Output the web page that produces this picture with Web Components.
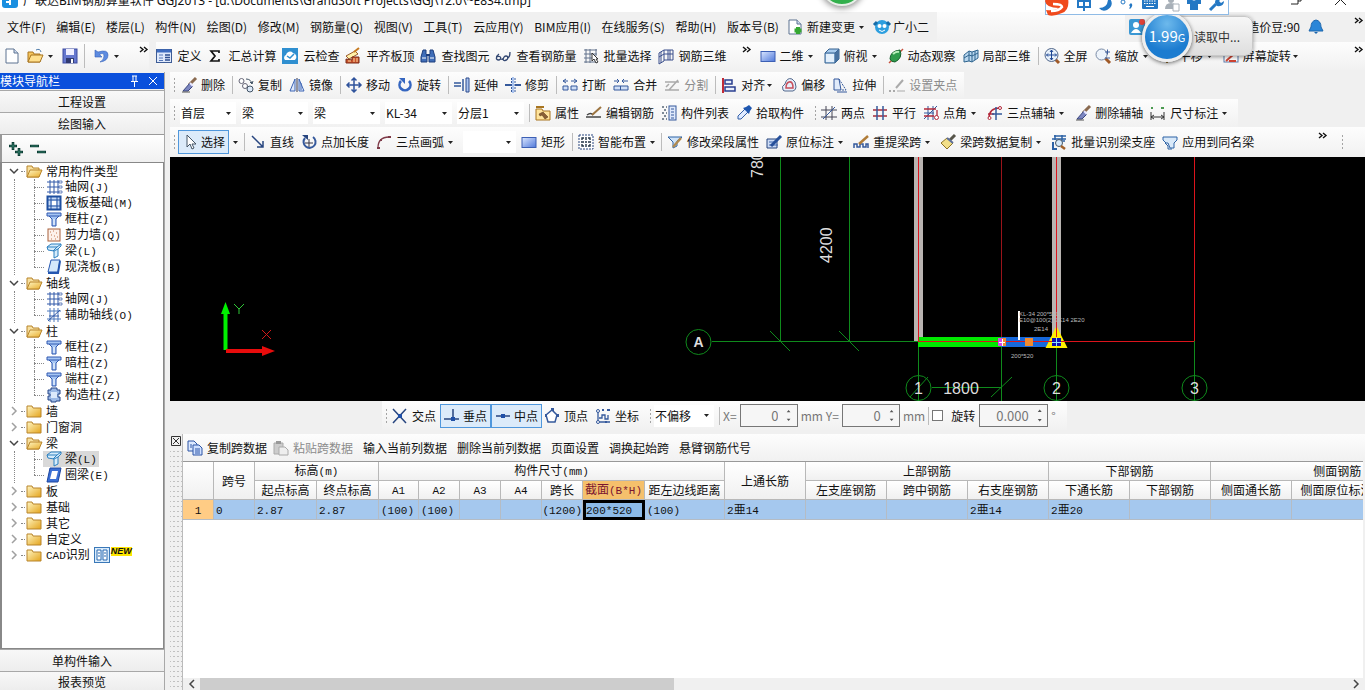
<!DOCTYPE html>
<html lang="zh-CN">
<head>
<meta charset="utf-8">
<title>广联达BIM钢筋算量软件</title>
<style>
html,body{margin:0;height:100%;overflow:hidden}
body{font:12px/16px "Noto Sans CJK SC","Noto Sans",sans-serif;color:#111;background:#f0f0f0}
</style>
</head>
<body>
<app-window></app-window>
<script>
const funnel=(a,b)=>`<path d="M1 2h14v3h-2l-3 3v7H6V8L3 5H1z" fill="${a}" stroke="${b}"/><path d="M3 5h10" stroke="${b}"/><path d="M8 8v6" stroke="#fff"/>`;
const brush='<path d="M15 1l-7 7" stroke="#8a6a50" stroke-width="3"/><path d="M9 6l3 3-5 5H2z" fill="#7c86c0" stroke="#39457e"/><path d="M1 15h8" stroke="#555"/><path d="M9 6l3 3" stroke="#e8e8ff" stroke-width="2"/>';
const mag='<path d="M10 10l5 5" stroke="#a05a28" stroke-width="3"/>';
const sheet='<path d="M2 1h8l4 4v10H2z" fill="#fff" stroke="#5c7291"/><path d="M10 1v4h4" fill="#cfdcf0" stroke="#5c7291"/>';
const ICONS={
app:'<rect width="16" height="16" rx="3" fill="#1a8fe0"/><path d="M3 7h10M8 7v6M4 10h5" stroke="#fff" stroke-width="2"/>',
newdoc:sheet,
open:'<path d="M1 14V4h5l1 2h6v8z" fill="#f6c55c" stroke="#a87520"/><path d="M1 14l3-7h12l-3 7z" fill="#ffdf8c" stroke="#a87520"/><path d="M9 2q4-2 5 2" stroke="#4a78a8" fill="none"/>',
save:'<rect x="1" y="1" width="14" height="14" fill="#6577ce" stroke="#3c4ba0"/><rect x="4" y="1" width="8" height="6" fill="#eef"/><rect x="4" y="10" width="8" height="5" fill="#303a70"/><rect x="9" y="11" width="2" height="4" fill="#fff"/>',
undo:'<path d="M2 2v7h7L6.500 6.500Q11 4 11 8t-4 6q8-1 8-7T5 4z" fill="#5d8be0" stroke="#3460b8" stroke-width=".6"/>',
define:'<rect x="0.500" y="1.500" width="15" height="13" fill="#dfe9fb" stroke="#3d5c96"/><path d="M1 3h14" stroke="#3d6bc0" stroke-width="3"/><path d="M3 7h4M3 10h4M3 12.500h4" stroke="#5577b8"/><path d="M9 7h5M9 9.500h5M9 12h5" stroke="#2e4e90" stroke-width="1.500"/>',
sigma:'<path d="M12 5V3H4l4 5-4 5h8v-2" fill="none" stroke="#111" stroke-width="1.700"/>',
cloud:'<rect width="16" height="16" fill="#2f8fd0"/><path d="M3 12a3 3 0 0 1 1-5 4 4 0 0 1 7-2 4 4 0 0 1 2 7z" fill="#fff"/><path d="M5 8l3 2 4-4" stroke="#2f8fd0" stroke-width="1.500" fill="none"/>',
align:'<path d="M1 8l9-5 3 3-9 5z" fill="#fff1a8" stroke="#9b5a2b"/><path d="M9 4l5-4" stroke="#c67a20" stroke-width="2"/><path d="M1 15v-4l6 1V9h7v6z" fill="#c9522c" stroke="#7a2c18"/><path d="M3 13h3M9 10v4M12 10v4" stroke="#ffd9a0"/>',
find:'<path d="M3 2h3v4l1 1v7H1V9zM10 2h3l2 7v5H9V7l1-1z" fill="#3f6db8" stroke="#1e3e7c"/><path d="M2 10h4M10 10h4" stroke="#fff"/><path d="M6 7h4" stroke="#1e3e7c" stroke-width="2"/>',
view:'<path d="M4 6Q1 8 1.500 11q2 2 4 0 1-3-3-2.500M9 9q-2 4 1 3.500 3-.5 3-3.500-2-2-4 0M12 10q3 0 3-6M6 11q2 1 2-1" fill="none" stroke="#344872" stroke-width="1.300"/>',
batch:'<path d="M1 2h13M1 6h13M1 10h8M1 14h13M3 1v14M7 1v14M13 1v7" stroke="#63728c"/><path d="M9 5v8l2-2 2 4 2-1-2-3h2z" fill="#fff" stroke="#333"/>',
grid3:'<path d="M1 5l5-3v11l-5 3zM6 2h9v10H6M1 9l5-3h9M10 2v10M3 4v11M12 2v10" fill="none" stroke="#3a4f8c"/>',
rect:'<defs><linearGradient id="r" x2="1" y2="1"><stop stop-color="#dbe7ff"/><stop offset="1" stop-color="#4f78da"/></linearGradient></defs><rect x="1" y="3.500" width="14" height="10" fill="url(#r)" stroke="#3c5fb4"/>',
cube:'<path d="M1 5l4-4h10v10l-4 4H1z" fill="#a8cbee" stroke="#35608e"/><path d="M1 5h10v10M11 5l4-4" fill="none" stroke="#35608e"/><path d="M2 6h8v8H2z" fill="#e3effb"/><path d="M11 5l4-4v10l-4 4z" fill="#47719f"/>',
orbit:'<path d="M1 15L15 1" stroke="#c7503c" stroke-width="1.500"/><path d="M2 11Q2 3 12 2q3 8-5 12-4 0-5-3" fill="#2f9b4c" stroke="#17602c"/><path d="M5 6q3-3 6-2" stroke="#b9f0bb" stroke-width="2" fill="none"/>',
part3:'<path d="M1 7l5-4 3 1 6-2v8l-6 4-3-1-5 1z" fill="#b8d6ee" stroke="#2f648e"/><path d="M6 3v10M9 4v10M12 3v9M1 10l5-3 3 1 6-3" fill="none" stroke="#2f648e"/>',
full:mag+'<circle cx="7.500" cy="7" r="6.500" fill="#e8f1fb" stroke="#52688c"/><path d="M7.500 2v10M2.500 7h10M6 4l1.500-2L9 4M6 10l1.500 2L9 10M4 5.500L2.500 7 4 8.500M11 5.500L12.500 7 11 8.500" fill="none" stroke="#1c4695"/>',
zoom:mag+'<circle cx="6.500" cy="6.500" r="5.500" fill="#eef4fb" stroke="#7a8ba6"/><path d="M10 4h5M12.500 1.500v5M10 10h5" stroke="#3b5c9c"/>',
pan:'<path d="M8 1v14M1 8h14" stroke="#987434" stroke-width="2"/>',
spin:'<rect x="1" y="2" width="14" height="12" fill="#fff" stroke="#5a78a8"/><path d="M1 6h14" stroke="#7bb552" stroke-width="3"/><path d="M3 13l8-7M6 13h7" stroke="#cf4534" stroke-width="2"/>',
brush:brush,
copy:'<circle cx="3.500" cy="4" r="2.500" fill="#fff" stroke="#667"/><circle cx="7" cy="9" r="2.500" fill="#fff" stroke="#667"/><circle cx="12" cy="12" r="3" fill="#dce8f8" stroke="#456"/><path d="M8 2q5 0 6 5M12 5l2 2 1-3" fill="none" stroke="#456"/>',
mirror:'<path d="M6 2v12H1z M10 2v12h5z" fill="#dfe9fb" stroke="#3c64b4"/><path d="M8 1v14" stroke="#334"/><path d="M12 6v7" stroke="#3c64b4"/>',
move:'<path d="M8 1v14M1 8h14M5.500 3.500L8 1l2.500 2.500M5.500 12.500L8 15l2.500-2.500M3.500 5.500L1 8l2.500 2.500M12.500 5.500L15 8l-2.500 2.500" fill="none" stroke="#2f539c" stroke-width="1.500"/>',
rotate:'<path d="M4 4a5.500 5.500 0 1 0 8 0" fill="none" stroke="#3566c0" stroke-width="2.600"/><path d="M2 1h6v6z" fill="#3566c0"/>',
extend:'<path d="M0 6h7M0 9h7M9 2v12" stroke="#35599c" stroke-width="1.500"/><path d="M12 1h3v14h-3z" fill="#a9c3ef" stroke="#2c4a8c"/>',
trim:'<path d="M0 8h6M10 8h6" stroke="#35599c" stroke-width="2"/><path d="M8 0v16" stroke="#a9c3ef" stroke-width="2"/><path d="M6.500 1v14M10 1v14" stroke="#35599c" stroke-dasharray="2 1"/>',
cut:'<path d="M1 13h5V9H1zM9 13h6V9H9z" fill="#cfdef6" stroke="#35599c"/><path d="M1 4h5M4 2L1 4l3 2M9 4h6M12 2l3 2-3 2" fill="none" stroke="#35599c"/>',
join:'<path d="M1 13h14v-4H1z" fill="#cfdef6" stroke="#35599c"/><path d="M1 4h5M4 2l2 2-2 2M15 4H9M11 2L9 4l2 2M7.500 9v4" fill="none" stroke="#35599c"/>',
split:'<path d="M1 5h14M1 13h14M2 10l3-3M5 13L14 3" fill="none" stroke="#aaa" stroke-width="1.500"/>',
lalign:'<path d="M2 1v15" stroke="#c02a36" stroke-width="2"/><path d="M4 3h7v4H4zM4 10h10v4H4z" fill="#e9effb" stroke="#2a3f90" stroke-width="1.500"/>',
offset:'<path d="M2 13Q0 9 4 7q2-7 7-5 4 2 4 8 0 3-3 4H4q-1 0-2-1" fill="#e7effb" stroke="#52688c"/><path d="M5 11q0-5 3-6 4-1 4 6z" fill="none" stroke="#c8505c" stroke-width="1.500"/>',
stretch:'<path d="M2 2h5l2 11H2z" fill="#e1ebfa" stroke="#35599c"/><path d="M7 2l7 11H9" fill="none" stroke="#35599c" stroke-dasharray="2 1"/><path d="M5 15h10" stroke="#35599c"/>',
clamp:'<path d="M0 14h2M4 14h2M7 11l7-8" stroke="#aaa" stroke-width="2"/><path d="M8 14h8" stroke="#aaa"/>',
props:'<path d="M1 4h6l1 2h7v9H1z" fill="#ffe49c" stroke="#a87520"/><path d="M1 2h8" stroke="#a87520" stroke-width="2"/><path d="M4 9l4-2 5 5-3 2-3-4-2 1z" fill="#8a6036" stroke="#503010" stroke-width=".5"/>',
rebar:'<path d="M0 12h15M1 10q4-3 6 0" fill="none" stroke="#444" stroke-width="1.500"/><path d="M6 10L15 2" stroke="#9c7440" stroke-width="2"/>',
list:'<path d="M1 2h2M1 8h2M1 14h2M5 2h1M5 8h1M5 14h1M3 5h2M3 11h2" stroke="#567" stroke-width="1.500"/><rect x="8" y="1" width="7" height="14" fill="#dfe9fb" stroke="#35599c"/><path d="M10 4h3M10 7h3M10 10h3M10 13h3" stroke="#35599c"/>',
picker:'<path d="M9 4l3 3-7 7H2v-3z" fill="#dfeaff" stroke="#315ea8"/><path d="M7 3l6 6 1-3 2-3-3-3-3 2z" fill="#1f57b0"/>',
two:'<path d="M0 5h16M0 12h16M5 1v14M11 1v14" stroke="#445"/><path d="M2 14L14 2" stroke="#35599c"/>',
para:'<path d="M1 5h14M1 11h14" stroke="#a52b3c" stroke-width="1.500"/><path d="M5 1v14M11 1v14" stroke="#35599c" stroke-width="1.500"/>',
angle:'<path d="M1 8h10M5 1v14M10 1v14M1 14L14 1" stroke="#35599c"/><path d="M1 4h12M14 5v6M1 11h10" stroke="#b2283a" stroke-width="1.300"/><circle cx="13.500" cy="12.500" r="2" fill="#fff" stroke="#b2283a"/>',
arcaxis:'<path d="M2 13Q2 3 13 3M1 9h6" fill="none" stroke="#b2283a" stroke-width="1.500"/><circle cx="13" cy="3" r="1.500" fill="#fff" stroke="#b2283a"/><circle cx="2.500" cy="13" r="1.500" fill="#fff" stroke="#b2283a"/><path d="M5 9h10M9 2v13" stroke="#35599c" stroke-width="1.500"/>',
dim:'<path d="M1 7v8M14 7v8M1 12h13M4 10l-3 2 3 2M11 10l3 2-3 2" fill="none" stroke="#333"/><path d="M1 3h2M11 3h3" stroke="#4a9a50" stroke-width="2"/>',
arrow:'<path d="M5 1v12l3-3 2 5 2-1-2-4h4z" fill="#fff" stroke="#456"/>',
line:'<path d="M2 2l11 11M13 7v6H7" stroke="#27457f" stroke-width="1.500" fill="none"/>',
ptlen:'<path d="M4 4a6 6 0 1 0 8-1" fill="none" stroke="#35599c" stroke-width="2"/><path d="M8 5v8M4 9h8" stroke="#334"/><path d="M1 1h6v5z" fill="#27457f"/>',
arc:'<path d="M2 14Q2 3 13 3" fill="none" stroke="#7e3a48" stroke-width="1.300"/><path d="M1 13h3v2H1zM12 2h3v2h-3zM4 5h2v2H4z" fill="#7e3a48"/>',
smart:'<rect x="1" y="1" width="14" height="14" fill="#fff" stroke="#27457f" stroke-dasharray="2 1"/><path d="M8 3v3M8 10v3M3 8h3M10 8h3M4 6V4h2M12 6V4h-2M4 10v2h2M12 10v2h-2M7 8h2" fill="none" stroke="#234" stroke-width="1.400"/>',
editseg:'<path d="M1 3h14l-5 4v5l-4 2V8z" fill="#cfe3f8" stroke="#2d62a5"/><path d="M6 13L14 4" stroke="#b08a50" stroke-width="2.500"/>',
label:'<path d="M1 5h10v9H1z" fill="#cddcf5" stroke="#27457f"/><path d="M3 11h9M3 8h6" stroke="#3f66ae"/><path d="M5 12L15 2" stroke="#27509a" stroke-width="3"/>',
respan:'<path d="M1 14v-4h3v3h3v-3h3v3h3v-3h2v4" fill="none" stroke="#35599c" stroke-width="1.500"/><path d="M6 10L15 2" stroke="#b07c38" stroke-width="2.500"/>',
clean:'<path d="M15 1l-5 5" stroke="#57554b" stroke-width="3"/><path d="M1 9l6-5 6 5-6 6z" fill="#f2df88" stroke="#8d7225"/><path d="M7 4l6 5" stroke="#5d6f9a" stroke-width="2"/>',
recog:'<path d="M3 2h12M1 5h14M4 1v5M11 1v5M5 7h9" stroke="#2d62a5" stroke-width="1.500"/><circle cx="8" cy="9" r="3.500" fill="#d8ebfa" stroke="#456"/><path d="M10 12l4 3" stroke="#a26028" stroke-width="2.500"/><path d="M2 8v7h4" fill="none" stroke="#2d62a5" stroke-width="2"/>',
same:'<path d="M1 3h14v3l-3 3v5H8l-2-5H4L1 6z" fill="#d9e9f9" stroke="#2d62a5"/><path d="M3 9l3 3v3h4" fill="none" stroke="#2d62a5"/>',
cross:'<path d="M1 1l13 14M14 1L1 15" stroke="#27457f" stroke-width="1.500"/><rect x="6" y="6" width="4" height="4" fill="#2050a8"/>',
perp:'<path d="M0 11h15M9 1v10" stroke="#27457f" stroke-width="1.500"/><rect x="7" y="9" width="4" height="4" fill="#2050a8"/>',
mid:'<path d="M1 8h14" stroke="#27457f" stroke-width="1.500"/><rect x="6" y="6" width="4" height="4" fill="#2050a8"/>',
vertex:'<path d="M8 2l5 5-2 7H4L2 7z" fill="#fff" stroke="#35599c" stroke-width="1.500"/><path d="M7 0h3v3H7zM1 6h2v3H1zM12 6h3v3h-3z" fill="#35599c"/>',
coord:'<path d="M3 4v10h12M4 10h3V7h3v4h3V7" fill="none" stroke="#35599c" stroke-width="1.300"/><circle cx="3" cy="3" r="1.500" fill="#fff" stroke="#35599c"/><circle cx="3" cy="14" r="1.500" fill="#fff" stroke="#35599c"/><path d="M7 2h2M12 2h3M10 14h2" stroke="#35599c" stroke-width="2"/>',
copyspan:'<path d="M1 1h6l3 3v7H1z" fill="#dce9ff" stroke="#2d55a5"/><path d="M6 5h6l3 3v7H6z" fill="#cfe0ff" stroke="#2d55a5"/><path d="M8 9h5M8 11h5M8 13h5M3 5h2M3 7h2" stroke="#2d55a5"/>',
paste:'<path d="M1 3h9v11H1z" fill="#ccc" stroke="#aaa"/><path d="M3 1h5v3H3z" fill="#999"/><path d="M6 7h6l3 3v5H6z" fill="#eee" stroke="#aaa"/>',
change:sheet+'<path d="M11 8v7M7.500 11.500h7" stroke="#36a832" stroke-width="4"/>',
mascot:'<circle cx="8" cy="8" r="7" fill="#2d9fdf"/><path d="M0 6l3-3M16 6l-3-3" stroke="#176ca8" stroke-width="3"/><circle cx="5.500" cy="7" r="2" fill="#fff"/><circle cx="10.500" cy="7" r="2" fill="#fff"/><path d="M5 11q3 3 6 0" stroke="#fff" fill="none"/>',
user:'<rect width="16" height="16" rx="2" fill="#3b98d4"/><circle cx="7" cy="6" r="3" fill="#fff"/><path d="M2 14q5-8 10 0z" fill="#fff"/><circle cx="13" cy="3" r="3" fill="#e04137"/>',
bell:'<path d="M8 1q5 1 5 7l2 4H1l2-4q0-6 5-7z" fill="#2a86d8" stroke="#1c66ad"/><path d="M6 13h4l-2 2z" fill="#1c66ad"/>',
folder:'<defs><linearGradient id="f" x2="1" y2="1"><stop stop-color="#fff6c4"/><stop offset="1" stop-color="#e4a41c"/></linearGradient></defs><path d="M1 14V3h5l1 2h8v9z" fill="url(#f)" stroke="#b8842a"/>',
folderopen:'<defs><linearGradient id="g" x2="1" y2="1"><stop stop-color="#fff6c4"/><stop offset="1" stop-color="#e8ac2a"/></linearGradient></defs><path d="M1 14V3h5l1 2h6v9z" fill="#f7e0a0" stroke="#b8842a"/><path d="M1 14l3-7h12l-3 7z" fill="url(#g)" stroke="#b8842a"/>',
axis:'<path d="M1 3h12M1 8h12M1 13h12M4 1v14M8 1v14M12 1v14" stroke="#3058a8"/><path d="M13 2h3v2h-3zM13 7h3v2h-3zM13 12h3v2h-3z" fill="#fff" stroke="#3058a8" stroke-width=".7"/>',
raft:'<rect x="1.500" y="1.500" width="13" height="13" fill="#c6daf6" stroke="#1e4fa0" stroke-width="2"/><path d="M2 5h12M2 11h12M5 2v12M11 2v12" stroke="#1e4fa0"/><rect x="6" y="6" width="4" height="4" fill="#fff"/>',
column:funnel('#a6c6f4','#3058b0'),
wall:'<rect x="2" y="2" width="12" height="12" fill="#fdf1ea" stroke="#a8603c"/><path d="M4 5h1M7 4h1M10 6h1M5 8h1M8 9h1M11 10h1M5 12h1M9 12h1" stroke="#c47850"/>',
beam:'<path d="M1 4l4-3h10v2l-3 3v7l-4 2V8L2 7z" fill="#d6ecfb" stroke="#2d80c0"/><path d="M1 4h10l4-3M11 4L7 8M8 8l4-2" fill="none" stroke="#2d80c0"/>',
slab:'<path d="M5 1h9l-2 12H2z" fill="#d4e8fb" stroke="#2456b0"/><path d="M2 14h10l2-12" fill="none" stroke="#2456b0" stroke-width="2"/>',
aux:'<path d="M1 4h14M1 12h14M4 1v14M12 1v14M8 1v14" stroke="#4d78bd"/><path d="M2 14L14 3M3 9h10" stroke="#3058a8"/>',
struct:'<path d="M5 1h6v2h3v4h-2v3h2v4h-4v1H5v-2H2V9h2V7H2V3h3z" fill="#9cb9e6" stroke="#274788"/><path d="M5 5h6v6H5z" fill="#dce9fb"/>',
ring:'<path d="M4 1h11l-3 14H1z" fill="#3b6fd4" stroke="#1c46a0"/><path d="M6 4h6l-2 8H4z" fill="#fff"/>',
cad:'<rect x=".5" y=".5" width="15" height="15" fill="#d9ebfb" stroke="#3a78b8"/><path d="M3 3h4v10H3zM9 3h4v10H9z" fill="#fff" stroke="#2868b0"/><path d="M4 6h2M4 9h2M10 6h2M10 9h2" stroke="#2868b0"/>',
plus:'<path d="M5 1v8M1 5h8M11 7v8M7 11h8" stroke="#0c3c34" stroke-width="2.600"/><path d="M5 2v6M2 5h6M11 8v6M8 11h6" stroke="#3f9a80" stroke-width=".6"/>',
minus:'<path d="M0 5h9M7 11h9" stroke="#0c3c34" stroke-width="2.600"/><path d="M1 5h7M8 11h7" stroke="#3f9a80" stroke-width=".6"/>',
sogou:'<path d="M2-5Q18-8 22-2q2 12-6 15-9 4-14 2l-2-5q8 1 13-2-13 0-14-7z" fill="#f04a1c"/><path d="M4-2q8-4 14 0M7 4q9 0 9 3-3 4-11 4" stroke="#fff" stroke-width="2.500" fill="none"/>',
zhong:'<path d="M2 1h12v6H2zM8-3v14" fill="none" stroke="#2478c4" stroke-width="2"/>',
moon:'<path d="M10-4q8 9-1 14-5 2-8-2 10 0 9-12z" fill="#2478c4"/>',
punct:'<circle cx="3" cy="2" r="2" fill="none" stroke="#2478c4"/><path d="M11 3q3 2-1 6l-1-1q2-1 0-3z" fill="#2478c4"/>',
keys:'<rect y="-2" width="16" height="11" rx="1" fill="#2478c4"/><path d="M2 1h12M2 3.500h12" stroke="#fff" stroke-dasharray="1.500 1"/><path d="M4 6.500h8" stroke="#fff"/>',
person:'<circle cx="7" cy="0" r="3" fill="#a8b0b8"/><path d="M1 9q0-6 6-6t6 6z" fill="#a8b0b8"/><path d="M9 4h6v7H9z" fill="#fff" stroke="#a8b0b8"/>',
shirt:'<path d="M1-1h4q3 3 6 0h4v5h-3v6H4V4H1z" fill="#2478c4"/>',
wrench:'<path d="M2 10l6-6" stroke="#2478c4" stroke-width="3"/><path d="M7 3q0-6 7-5l-3 3 2 2 3-2q0 6-7 5z" fill="#2478c4"/>'
};
const CARET='<svg width="5" height="3" viewBox="0 0 5 3" aria-hidden="true"><path d="M0 0h5L2.500 3z" fill="#222"/></svg>';
const ascii=t=>t.replace(/[ -~]+/g,s=>`<span class="m">${s}</span>`);
const MONO='.m{font:11px/16px "Liberation Mono",monospace}';

function define(name,render){
  customElements.define(name,class extends HTMLElement{
    connectedCallback(){
      if(this.shadowRoot) return;
      const t=document.createElement('template');
      t.innerHTML=render(this);
      this.attachShadow({mode:'open'}).append(t.content.cloneNode(true));
    }
  });
}

define('ui-icon',e=>`<style>:host{display:block;flex:none;width:16px;height:16px}svg{display:block;overflow:visible}</style>
<svg width="16" height="16" viewBox="0 0 16 16" aria-hidden="true">${ICONS[e.getAttribute('name')]||''}</svg>`);

define('tool-button',e=>{
  const i=e.getAttribute('icon');
  return `<style>
:host{display:block;flex:none;margin-right:var(--item-gap,7px)}
button{display:flex;align-items:center;gap:var(--icon-gap,4px);height:24px;margin:0;padding:0;border:0;background:none;font:inherit;color:inherit;white-space:nowrap}
button:disabled{color:#8c8c8c}
:host([pressed]) button{background:#dcebfa;outline:1px solid #4f97dc;outline-offset:-1px;padding:0 4px}
.c{display:flex;justify-content:center;width:var(--caret,13px);margin-left:calc(0px - var(--icon-gap,4px))}
</style><button${e.hasAttribute('disabled')?' disabled':''}>${i?`<ui-icon name="${i}"></ui-icon>`:''}<slot></slot>${e.hasAttribute('caret')?`<span class="c">${CARET}</span>`:''}</button>`});

define('tool-sep',()=>`<style>:host{display:block;flex:none;width:1px;height:18px;background:#bcbcbc;margin-right:5px}</style>`);
define('tool-grip',()=>`<style>:host{display:block;flex:none;width:3px;height:16px;margin:0 4px 0 3px;background:radial-gradient(circle,#a4a4a4 1px,transparent 1px) 0 0/3px 4px}</style>`);
define('tool-more',()=>`<style>:host{display:block;flex:none;width:10px;height:20px}svg{display:block}</style>
<svg width="10" height="8" viewBox="0 0 10 8"><path d="M1 1l3 2.500L1 6M5 1l3 2.500L5 6" fill="none" stroke="#111" stroke-width="1.400"/></svg>`);

define('tool-combo',e=>`<style>
:host{display:flex;flex:none;align-items:center;position:relative;width:var(--w,72px)}
select{appearance:none;width:100%;height:22px;margin:0 5px 0 0;padding:0 0 0 1px;border:0;border-radius:0;background:#fff;font:inherit;color:inherit}
svg{position:absolute;right:10px;pointer-events:none}
</style><select aria-label="${e.getAttribute('label')}"><option>${e.getAttribute('value')}</option></select>${CARET}`);

define('tool-bar',()=>`<style>
:host{display:flex;flex:none;align-items:center;box-sizing:border-box;background:linear-gradient(#fdfdfd,#f1f1f1)}
</style><slot></slot>`);

define('number-field',e=>`<style>
:host{display:flex;flex:none;align-items:center;color:#777}
label{display:flex;align-items:center;gap:3px}
.b{display:flex;align-items:center;box-sizing:border-box;width:var(--w,58px);height:23px;border:1px solid #777;background:#f6f6f6;padding-right:5px}
input{width:100%;min-width:0;border:0;padding:0 8px 0 0;background:none;text-align:right;font:inherit;font-size:13px;color:inherit}
</style><label>${e.getAttribute('label')||''}<span class="b"><input value="${e.getAttribute('value')}" aria-label="${e.getAttribute('name')}"><svg width="7" height="15" viewBox="0 0 7 15"><path d="M1 3h5L3.500 0zM1 12h5l-2.500 3z" fill="#555"/></svg></span>${e.getAttribute('unit')}</label>`);

define('title-bar',()=>`<style>
:host{display:flex;align-items:flex-end;height:12px;flex:none;overflow:hidden;background:#fff;font-family:"Noto Sans","Noto Sans CJK SC",sans-serif}
ui-icon{margin:0 5px 4px 2px}
h1{font:inherit;margin:0;flex:1;padding-bottom:3px;white-space:nowrap}
svg{margin-right:16px}
</style><ui-icon name="app"></ui-icon><h1>广联达BIM钢筋算量软件 GGJ2013 - [d:\\Documents\\GrandSoft Projects\\GGJ\\12.0\\~E834.tmp]</h1>
<svg width="60" height="12" viewBox="0 0 60 12"><path d="M2 4h7V-3M9 1h3v-5M46-6L57 5M57-6L46 5" stroke="#222" fill="none"/></svg>`);

define('menu-bar',()=>`<style>
:host{display:flex;align-items:center;height:30px;flex:none;padding-left:7px}
nav{display:flex;justify-content:space-between;width:772px;flex:none}
a{color:inherit;text-decoration:none;white-space:nowrap}
.x{display:flex;align-items:center;margin-left:8px}
.f{flex:1;align-self:stretch;background:linear-gradient(#fcfcfc,#f1f1f1);margin-left:1px}
.r{display:flex;align-items:center;margin-left:4px}
.r span{margin:0 8px 0 102px}
tool-more{margin:0 0 0 30px;padding-right:1px}
</style><nav>${['文件(F)','编辑(E)','楼层(L)','构件(N)','绘图(D)','修改(M)','钢筋量(Q)','视图(V)','工具(T)','云应用(Y)','BIM应用(I)','在线服务(S)','帮助(H)','版本号(B)'].map(t=>`<a href="#">${t}</a>`).join('')}</nav>
<div class="x"><tool-button icon="change" caret style="--item-gap:6px">新建变更</tool-button><tool-button icon="mascot" style="--icon-gap:3px">广小二</tool-button></div><div class="f"></div>
<div class="r"><ui-icon name="user"></ui-icon><span>造价豆:90</span><ui-icon name="bell"></ui-icon><tool-more></tool-more></div>`);

define('main-tools',()=>`<style>
:host{display:flex;flex:none;height:30px}
tool-bar{height:28px}
.a{padding-left:4px;--item-gap:4px;--caret:15px}
.a tool-sep{margin:0 8px 0 0;height:24px}
.b{--item-gap:6px;--icon-gap:5px;margin-left:7px}
.c{flex:1;padding-left:8px}
.m1{margin-left:11px}.m2{margin-left:9px}
.end{margin:0 1px 0 auto}
</style>
<tool-bar class="a"><tool-button icon="newdoc"></tool-button><span>&nbsp;</span><tool-button icon="open" caret></tool-button><tool-button icon="save"></tool-button><span>&nbsp;</span><tool-sep></tool-sep><tool-button icon="undo" caret></tool-button><tool-more class="m1"></tool-more></tool-bar>
<tool-bar class="b"><tool-button icon="define">定义</tool-button><tool-button icon="sigma">汇总计算</tool-button><tool-button icon="cloud">云检查</tool-button><tool-button icon="align">平齐板顶</tool-button><tool-button icon="find">查找图元</tool-button><tool-button icon="view">查看钢筋量</tool-button><tool-button icon="batch">批量选择</tool-button><tool-button icon="grid3">钢筋三维</tool-button><tool-more class="m2"></tool-more></tool-bar>
<tool-bar class="c"><tool-button icon="rect" caret>二维</tool-button><tool-button icon="cube" caret>俯视</tool-button><tool-button icon="orbit">动态观察</tool-button><tool-button icon="part3">局部三维</tool-button><tool-sep></tool-sep><tool-button icon="full">全屏</tool-button><tool-button icon="zoom" caret>缩放</tool-button><tool-button icon="pan" caret>平移</tool-button><tool-button icon="spin" caret style="--caret:9px">屏幕旋转</tool-button><tool-more class="end"></tool-more></tool-bar>`);

define('edit-tools',()=>`<style>
:host{display:grid;flex:none;grid-template-rows:27px 28px 30px;justify-items:start}
tool-bar{height:26px}
.r3{height:28px}
.w{width:100%;height:30px;--caret:12px}
.end{margin:0 10px 0 auto}
.tail{margin-right:21px}
.g2{margin-right:5px}
.g4{margin-right:2px}
.caret{margin-right:6px;display:flex}
</style>
<tool-bar style="--caret:9px"><tool-grip class="g2"></tool-grip><tool-button icon="brush">删除</tool-button><tool-sep></tool-sep><tool-button icon="copy">复制</tool-button><tool-button icon="mirror">镜像</tool-button><tool-sep></tool-sep><tool-button icon="move">移动</tool-button><tool-button icon="rotate">旋转</tool-button><tool-sep></tool-sep><tool-button icon="extend">延伸</tool-button><tool-button icon="trim">修剪</tool-button><tool-sep></tool-sep><tool-button icon="cut">打断</tool-button><tool-button icon="join">合并</tool-button><tool-button icon="split" disabled>分割</tool-button><tool-sep></tool-sep><tool-button icon="lalign" caret>对齐</tool-button><tool-button icon="offset">偏移</tool-button><tool-button icon="stretch">拉伸</tool-button><tool-sep></tool-sep><tool-button icon="clamp" disabled>设置夹点</tool-button></tool-bar>
<tool-bar class="r3"><tool-grip></tool-grip><tool-combo label="楼层" value="首层" style="--w:61px"></tool-combo><tool-combo label="构件类型" value="梁"></tool-combo><tool-combo label="构件类别" value="梁"></tool-combo><tool-combo label="构件" value="KL-34"></tool-combo><tool-combo label="分层" value="分层1"></tool-combo><tool-sep></tool-sep><tool-button icon="props">属性</tool-button><tool-button icon="rebar">编辑钢筋</tool-button><tool-button icon="list">构件列表</tool-button><tool-button icon="picker">拾取构件</tool-button><tool-grip></tool-grip><tool-button icon="two">两点</tool-button><tool-button icon="para">平行</tool-button><tool-button icon="angle" caret>点角</tool-button><tool-button icon="arcaxis" caret>三点辅轴</tool-button><tool-button icon="brush">删除辅轴</tool-button><tool-button icon="dim" caret>尺寸标注</tool-button></tool-bar>
<tool-bar class="w"><tool-grip class="g4"></tool-grip><tool-button icon="arrow" pressed style="--item-gap:4px;--icon-gap:3px">选择</tool-button><span class="caret">${CARET}</span><tool-sep></tool-sep><tool-button icon="line">直线</tool-button><tool-button icon="ptlen">点加长度</tool-button><tool-button icon="arc" caret>三点画弧</tool-button><tool-combo label="弧参数" value="" style="--w:58px"></tool-combo><tool-button icon="rect">矩形</tool-button><tool-sep></tool-sep><tool-button icon="smart" caret style="--item-gap:3px">智能布置</tool-button><tool-sep></tool-sep><tool-button icon="editseg">修改梁段属性</tool-button><tool-button icon="label" caret>原位标注</tool-button><tool-button icon="respan" caret>重提梁跨</tool-button><tool-button icon="clean" caret>梁跨数据复制</tool-button><tool-button icon="recog">批量识别梁支座</tool-button><tool-button icon="same">应用到同名梁</tool-button><tool-more class="end"></tool-more><tool-grip class="tail"></tool-grip></tool-bar>`);

define('tree-node',e=>`<style>${MONO}
:host{display:flex;align-items:center;height:16px;margin-left:32px;position:relative;white-space:nowrap}
:host::before{content:"";width:10px;border-top:1px dotted #888;flex:none}
:host::after{content:"";position:absolute;left:0;top:0;height:16px;border-left:1px dotted #888}
:host(:last-child)::after{height:8px}
span.l{display:flex;align-items:center;padding:0 2px 0 3px;gap:3px;height:16px;margin-left:-1px}
:host([selected]) .l{background:#d9d9d9}
</style><span class="l"><ui-icon name="${e.getAttribute('icon')}"></ui-icon><span>${ascii(e.getAttribute('label'))}</span></span>`);

define('tree-group',e=>{
  const o=e.hasAttribute('open');
  return `<style>${MONO}
:host{display:block}
.h{display:flex;align-items:center;height:16px;white-space:nowrap}
.h svg{width:10px;margin:0 2px 0 7px}
.h i{width:4px;border-top:1px dotted #888;margin-right:1px}
.h ui-icon{margin-right:4px}
.k{position:relative}
.k::before{content:"";position:absolute;left:12px;top:0;bottom:0;border-left:1px dotted #888}
b{font:italic bold 9px/9px "Liberation Sans",sans-serif;background:#ffe600;margin:-7px 0 0 1px}
</style><div class="h"><svg height="10" viewBox="0 0 10 10"><path d="${o?'M1 3l4 4 4-4':'M3 1l4 4-4 4'}" fill="none" stroke="${o?'#444':'#a0a0a0'}" stroke-width="1.500"/></svg><i></i><ui-icon name="${o?'folderopen':'folder'}"></ui-icon><span>${ascii(e.getAttribute('label'))}</span>${e.hasAttribute('fresh')?'<ui-icon name="cad" style="margin:0 0 0 4px"></ui-icon><b>NEW</b>':''}</div><div class="k"><slot></slot></div>`});

define('nav-panel',()=>{
  const G=(l,k)=>`<tree-group label="${l}"${k?' open':''}${l==='CAD识别'?' fresh':''}>${(k||[]).map(([i,t,s])=>`<tree-node icon="${i}" label="${t}"${s?' selected':''}></tree-node>`).join('')}</tree-group>`;
  return `<style>
:host{display:flex;flex-direction:column;width:165px;flex:none;min-height:0;box-sizing:border-box;border-right:1px solid #a8a8a8}
header{display:flex;align-items:center;height:16px;margin-top:1px;background:#0a50dc;color:#fff;flex:none}
header span{flex:1}
header svg{margin-right:4px}
button{display:block;flex:none;width:100%;height:22px;margin:0;padding:0;border:1px solid #a8a8a8;border-width:1px 0 0;background:linear-gradient(#f8f8f8,#ededed);font:inherit;color:inherit}
.t{display:flex;align-items:center;gap:6px;box-sizing:border-box;height:28px;flex:none;padding-left:6px;border:1px solid #999;border-width:1px 0 0 2px;background:linear-gradient(#fff,#f0f0f0)}
.tree{flex:1;min-height:0;overflow:hidden;background:#fff;border:1px solid #888;border-left-width:2px}
.last{height:19px;padding-top:2px}
</style><header><span>模块导航栏</span><svg width="32" height="14" viewBox="0 0 32 14"><path d="M4 2h5M5 2v5M8 2v5M3 7.500h7M6.500 8v5M21 3l8 8M29 3l-8 8" stroke="#fff" fill="none"/></svg></header>
<button style="margin-top:1px">工程设置</button><button>绘图输入</button>
<div class="t"><ui-icon name="plus"></ui-icon><ui-icon name="minus"></ui-icon></div>
<div class="tree">${G('常用构件类型',[['axis','轴网(J)'],['raft','筏板基础(M)'],['column','框柱(Z)'],['wall','剪力墙(Q)'],['beam','梁(L)'],['slab','现浇板(B)']])+G('轴线',[['axis','轴网(J)'],['aux','辅助轴线(O)']])+G('柱',[['column','框柱(Z)'],['column','暗柱(Z)'],['column','端柱(Z)'],['struct','构造柱(Z)']])+G('墙')+G('门窗洞')+G('梁',[['beam','梁(L)',1],['ring','圈梁(E)']])+G('板')+G('基础')+G('其它')+G('自定义')+G('CAD识别')}</div>
<button>单构件输入</button><button class="last">报表预览</button>`});

define('cad-view',()=>`<style>:host{display:block;flex:none;height:244px;background:#000;overflow:hidden}svg{display:block;width:100%;height:244px}
text{font-family:"Liberation Sans",sans-serif;fill:#ddd}.s{font-size:6px;fill:#bbb}.d{font-size:16px}.a{font-size:14px;font-weight:700}</style>
<svg role="img" aria-label="梁平面图">
<g stroke="#0f8a1c" fill="none"><path d="M610.500 0v184M679.500 0v184M542 184.500h207M600 174l20 20M669 174l20 20M748.500 184v60M831.500 184v60M886.500 184v60M1024.500 184v60M762 230.500h70M740 240l18-20M821 240l21-20"/>
<circle cx="528.500" cy="185" r="12.500"/><circle cx="748.500" cy="231" r="12.500"/><circle cx="886.500" cy="231" r="12.500"/><circle cx="1024.500" cy="231" r="12.500"/></g>
<path d="M744 0h9v184h-9zM882 0h9v184h-9z" fill="#b9b4b1"/>
<path d="M748 180h83v10h-83z" fill="#00e800"/><path d="M831 180h50v10h-50z" fill="#1668dc"/>
<path d="M886.500 169l11 22h-22z" fill="#fff000"/>
<path d="M748.500 0v184M886.500 0v180M1024.500 0v184" stroke="#dc141c" fill="none"/><path d="M831.500 0v180" stroke="#9a141a"/>
<path d="M748 184.500h276" stroke="#dc141c"/>
<path d="M832 181h4v8h-4zM855 181h8v8h-8z" fill="#f08a30"/><path d="M828 181h4v8h-4z" fill="#d848e8"/><path d="M829 185.500h6M832.500 182v7" stroke="#fff"/>
<path d="M882 181h9v8h-9z" fill="#1010b0"/><path d="M882 185.500h9M886.500 181v8" stroke="#8fe0ff"/>
<path d="M849 154v29" stroke="#fff" stroke-width="2"/>
<text class="s" x="849" y="159">KL-34 200*520</text><text class="s" x="849" y="165">E10@100(2) 2E14 2E20</text><text class="s" x="864" y="174">2E14</text><text class="s" x="841" y="201">200*520</text>
<text class="a" x="528.500" y="190" text-anchor="middle">A</text>
<text class="d" x="748.500" y="237" text-anchor="middle">1</text><text class="d" x="791" y="237" text-anchor="middle">1800</text><text class="d" x="886.500" y="237" text-anchor="middle">2</text><text class="d" x="1024.500" y="237" text-anchor="middle">3</text>
<text class="d" transform="translate(662 106) rotate(-90)">4200</text><text class="d" transform="translate(593 21) rotate(-90)">7800</text>
<path d="M55.500 193v-38" stroke="#00f000" stroke-width="4"/><path d="M51 157l4.500-12 4.500 12z" fill="#00f000"/>
<path d="M56 194h38" stroke="#e80c0c" stroke-width="4"/><path d="M92 189l13 5-13 5z" fill="#e80c0c"/>
<path d="M64 147l5 5 5-5M69 152v5" stroke="#30c838" fill="none"/><path d="M92 173l9 9M101 173l-9 9" stroke="#d01818"/>
</svg>`);

define('snap-bar',()=>`<style>
:host{display:flex;flex:none;height:30px;margin-bottom:3px}
tool-bar{height:29px;margin-left:212px;padding-right:8px}
.g{margin-right:2px}
label{display:flex;align-items:center;margin-right:4px}
input{appearance:none;width:11px;height:11px;margin:0 8px 0 0;border:1px solid #777;background:#fff}
number-field{margin-right:3px}
tool-sep{margin-right:3px}
.n{--item-gap:0px;--icon-gap:3px}.p{--item-gap:4px}
</style><tool-bar><tool-grip></tool-grip><tool-button icon="cross" class="p">交点</tool-button><tool-button icon="perp" pressed class="n">垂点</tool-button><tool-button icon="mid" pressed style="--item-gap:2px;--icon-gap:3px">中点</tool-button><tool-button icon="vertex">顶点</tool-button><tool-button icon="coord">坐标</tool-button><tool-grip class="g"></tool-grip><tool-combo label="偏移方式" value="不偏移" style="--w:65px"></tool-combo><tool-sep></tool-sep><number-field label="X=" name="X" value="0" unit="mm"></number-field><number-field label="Y=" name="Y" value="0" unit="mm"></number-field><tool-sep></tool-sep><label><input type="checkbox">旋转</label><number-field name="角度" value="0.000" unit="°" style="--w:69px"></number-field></tool-bar>`);

define('span-grid',()=>{
  const w=[31,41,62,62,40,41,41,41,41,62,80,81,81,81,81,81,81,81,102,70];
  const sub=['起点标高','终点标高','A1','A2','A3','A4','跨长','截面(B*H)','距左边线距离'];
  const sub2=['左支座钢筋','跨中钢筋','右支座钢筋','下通长筋','下部钢筋','侧面通长筋','侧面原位标注筋','拉筋'];
  const row=['0','2.87','2.87','(100)','(100)','','','(1200)','200*520','(100)','2亜14','','','2亜14','2亜20','','','',''];
  return `<style>${MONO}
:host{display:block;flex:1;min-height:0;overflow:hidden;background:#fff;border-top:1px solid #999;margin-right:2px}
table{table-layout:fixed;border-collapse:separate;border-spacing:0;width:${w.reduce((a,b)=>a+b)}px}
th,td{box-sizing:border-box;padding:0;white-space:nowrap;overflow:hidden;font-weight:400;border-right:1px solid #b8b8b8;border-bottom:1px solid #b8b8b8}
th{height:19px;background:linear-gradient(#fff,#f0f0f0);text-align:center}
td{height:20px;background:#a5c8ee;border-color:#b5bcc4;padding-left:2px}
td.n{background:#ffcc85;text-align:center;padding:0}
th.on{background:#f5c06c;color:#7a1430}
td.on{outline:3px solid #000;outline-offset:-3px;background:#8dbbe8;padding-left:3px}
td.r{text-align:right;padding:0}
</style><table><colgroup>${w.map(x=>`<col style="width:${x}px">`).join('')}</colgroup>
<thead><tr><th rowspan="2"></th><th rowspan="2">跨号</th><th colspan="2">${ascii('标高(m)')}</th><th colspan="7">${ascii('构件尺寸(mm)')}</th><th rowspan="2">上通长筋</th><th colspan="3">上部钢筋</th><th colspan="2">下部钢筋</th><th colspan="3">侧面钢筋</th></tr>
<tr>${sub.concat(sub2).map(s=>`<th${s[0]==='截'?' class="on"':''}>${ascii(s)}</th>`).join('')}</tr></thead>
<tbody><tr><td class="n">${ascii('1')}</td>${row.map((s,i)=>`<td${i===8?' class="on"':i===7?' class="r"':''}>${ascii(s)}</td>`).join('')}</tr></tbody></table>`});

define('data-panel',()=>`<style>
:host{display:flex;flex:1;min-height:0}
.s{width:12px;flex:none;background:radial-gradient(circle,#c0c0c0 1px,transparent 1px) 2px 0/4px 5px}
.s svg{display:block;background:#f0f0f0}
.m{flex:1;min-width:0;display:flex;flex-direction:column;border-left:1px solid #bbb}
tool-bar{height:27px;padding-left:4px;--item-gap:10px}
.bar{display:flex;align-items:center;height:12px;flex:none;background:#f0f0f0;padding:0 5px}
.tr{flex:1;height:12px;margin:0 4px}
.th{width:41.25%;height:12px;background:#cdcdcd}
</style><div class="s"><svg width="12" height="13" viewBox="0 0 12 13"><path d="M1.500 2.500h9v9h-9zM3 4l6 6M9 4l-6 6" fill="none" stroke="#333"/></svg></div>
<div class="m"><tool-bar><tool-button icon="copyspan" style="--item-gap:6px">复制跨数据</tool-button><tool-button icon="paste" disabled>粘贴跨数据</tool-button><tool-button>输入当前列数据</tool-button><tool-button>删除当前列数据</tool-button><tool-button>页面设置</tool-button><tool-button>调换起始跨</tool-button><tool-button>悬臂钢筋代号</tool-button></tool-bar>
<span-grid></span-grid>
<div class="bar"><svg width="8" height="10" viewBox="0 0 8 10"><path d="M6 1L2 5l4 4" fill="none" stroke="#444" stroke-width="1.500"/></svg><div class="tr"><div class="th"></div></div><svg width="8" height="10" viewBox="0 0 8 10"><path d="M2 1l4 4-4 4" fill="none" stroke="#444" stroke-width="1.500"/></svg></div></div>`);

define('ime-bar',()=>`<style>:host{position:absolute;top:0;right:136px;width:184px;height:15px;box-sizing:border-box;display:flex;gap:6px;background:#fff;border:1px solid #8fbbe6;border-top:0}
.f{margin-right:8px}</style><ui-icon name="sogou" class="f"></ui-icon>${['zhong','moon','punct','keys','person','shirt','wrench'].map(n=>`<ui-icon name="${n}"></ui-icon>`).join('')}`);

define('memory-ball',()=>`<style>
:host{position:absolute;top:12px;right:112px;display:flex;align-items:center;width:111px;height:50px}
.t{position:absolute;left:25px;right:0;top:4px;height:40px;box-sizing:border-box;padding:0 12px;border-radius:8px;background:linear-gradient(#f7f7f7,#dedede);border:1px solid #c8c8c8;box-shadow:0 1px 4px #0006;text-align:right;line-height:40px;color:#333}
.b{position:relative;box-sizing:border-box;width:50px;height:50px;border-radius:50%;border:3px solid #eee;background:radial-gradient(circle at 50% 20%,#6db9ec,#1c7cd0 65%);box-shadow:0 1px 4px #0009;color:#fff;text-align:center;line-height:42px;font-size:15px}
small{font-size:11px}
</style><div class="t">读取中...</div><div class="b">1.99<small>G</small></div>`);

define('green-ball',()=>`<style>:host{position:absolute;top:-38px;left:calc(61.700% - 22px);box-sizing:border-box;width:44px;height:44px;border-radius:50%;border:2px solid #e8efe8;background:#32b04c;box-shadow:0 2px 6px #0007}</style>`);

define('app-window',()=>`<style>
:host{display:flex;flex-direction:column;height:100vh;position:relative;overflow:hidden}
.body{display:flex;flex:1;min-height:0;gap:5px}
main{display:flex;flex-direction:column;flex:1;min-width:0}
</style><title-bar></title-bar><menu-bar></menu-bar><main-tools></main-tools>
<div class="body"><nav-panel></nav-panel><main><edit-tools></edit-tools><cad-view></cad-view><snap-bar></snap-bar><data-panel></data-panel></main></div>
<green-ball></green-ball><memory-ball></memory-ball><ime-bar></ime-bar>`);
</script>
</body>
</html>
